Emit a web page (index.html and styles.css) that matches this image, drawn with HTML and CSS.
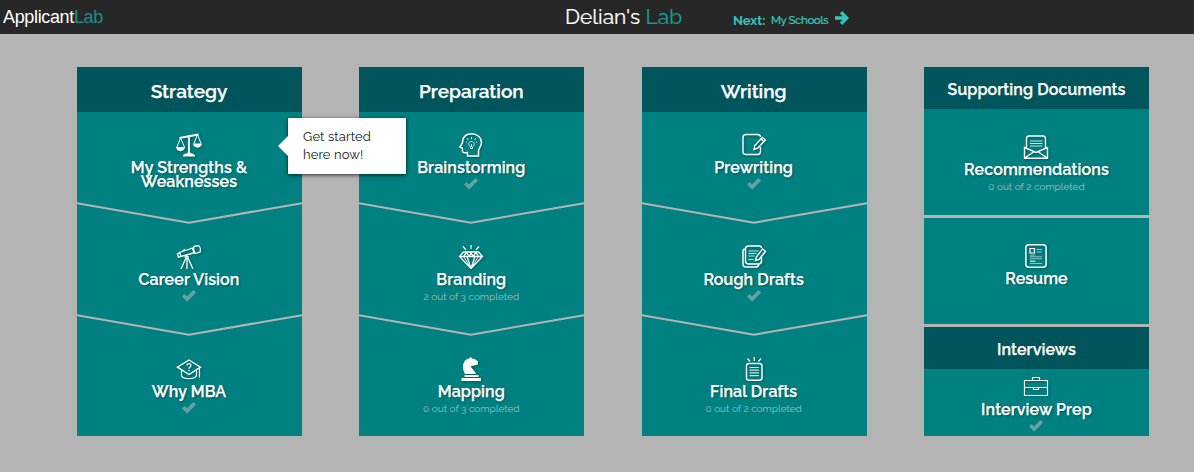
FILE: index.html
```html
<!DOCTYPE html>
<html lang="en">
<head>
<meta charset="utf-8">
<title>Delian's Lab</title>
<link rel="stylesheet" href="styles.css">
</head>
<body>
<header class="topbar">
  <div class="logo">Applicant<span class="logo-lab">Lab</span></div>
  <h1 class="heading">Delian's <span class="heading-lab">Lab</span></h1>
  <a class="next"><b class="next-label">Next:</b><span class="next-name">My Schools</span>
    <svg class="next-arrow" width="14" height="14" viewBox="0 0 14 14"><path d="M0 5.300h7.600L4.800 2.400 7.200 0 14 7l-6.800 7-2.400-2.400 2.800-2.900H0z" fill="currentColor"/></svg></a>
</header>

<svg width="0" height="0" class="defs">
  <symbol id="check" viewBox="0 0 14 12"><path d="M0 6.600 2.500 4.100 5 6.500 11.400 0 14 2.400 5.200 11.600z"/></symbol>
  <symbol id="chevron" viewBox="0 0 225 22"><path d="M0 1.200 112 20.700 225 1.200" fill="none" stroke="#b4b4b4" stroke-width="2"/></symbol>
</svg>

<main class="board">
  <section class="column">
    <h2 class="column-title">Strategy</h2>
    <div class="tile">
      <svg class="icon" viewBox="0 0 26 24"><path d="M3.500 5 22.500 1.500M13 2v18" stroke-width="1.800"/><path d="M4.500 5 1 14M4.500 5l4 9M21.500 1.500 18 10.500M21.500 1.500l3.500 9" stroke-width="1"/><path d="M0 14h9c-.3 5.500-8.700 5.500-9 0zM17 10.500h9c-.3 5.500-8.700 5.500-9 0zM7 23.500c0-2.300 1.500-3 3.500-3 .5-1.500 4.500-1.500 5 0 2 0 3.500.7 3.500 3z" class="solid"/></svg>
      <h3 class="tile-title">My Strengths &amp;<br>Weaknesses</h3>
      <svg class="chevron"><use href="#chevron"/></svg>
    </div>
    <div class="tile">
      <svg class="icon" viewBox="0 0 26 24"><path d="M3.600 7.500 16.500 3l1.500 5L5 11.500zM18 1.500l4.500-1c1.500 1 2.300 4 1.500 6.500L19.500 8.500c-1.500-1.500-2.200-4.500-1.500-7zM1.500 9l2.100-1.500L5 11.500l-2.600.7zM6.500 5.500l2.500-1M11 10v2.500M8.500 12h4.500M10 13 5 24M11 13V24M12 13 17 24" stroke-width="1.300"/></svg>
      <h3 class="tile-title">Career Vision</h3>
      <svg class="check"><use href="#check"/></svg>
      <svg class="chevron"><use href="#chevron"/></svg>
    </div>
    <div class="tile tile-last">
      <svg class="icon" viewBox="0 0 26 24"><path d="M1.500 10.200 13 3l11.500 7.200L13 17.500z" stroke-width="1.400"/><path d="M5.500 13v6c2 3.500 12.500 3.500 15 0v-6M23.500 11v9.500" stroke-width="1.200"/><path d="M11 8.500c0-2.500 4-2.500 4 0 0 1.700-2 1.500-2 3.200M13 13v1.300" stroke-width="1.300"/></svg>
      <h3 class="tile-title">Why MBA</h3>
      <svg class="check"><use href="#check"/></svg>
    </div>
    <div class="tip">Get started<br>here now!<svg class="tip-arrow" viewBox="0 0 10 20"><path d="M10 0 0 10l10 10z" fill="#fff"/></svg></div>
  </section>

  <section class="column">
    <h2 class="column-title">Preparation</h2>
    <div class="tile">
      <svg class="icon" viewBox="0 0 26 24"><path d="M9.500 23v-3.500c-2.500.5-4.800.8-5-1.200l-.2-3.300-2.300-.8 2.500-4.700C4.500 3.500 8.500.8 13.500.8c5.500 0 10 3.700 10 8.700 0 4-3 5.500-3 8.800V23z" stroke-width="1.500"/><path d="M12.500 15.500v-1.800c-3-1.500-2-5.200 1-5.200s4 3.700 1 5.200v1.800zM13.500 4v2M9 5l1.500 2M18 5l-1.500 2M8 9l1 .5M19 9l-1 .5M13.500 11v3" stroke-width=".8"/></svg>
      <h3 class="tile-title">Brainstorming</h3>
      <svg class="check"><use href="#check"/></svg>
      <svg class="chevron"><use href="#chevron"/></svg>
    </div>
    <div class="tile">
      <svg class="icon" viewBox="0 0 26 24"><path d="M5.500 7h15l4 4.500L13 23.500 1.500 11.500zM1.500 11.500h23M9 11.500l4 12 4-12M5.500 11.500 8.500 7.500l3 4 1.500-4 2 4 3-4 2.500 4" stroke-width="1.300"/><path d="M5.500 11.500 13 23.500l7.500-12" stroke-width=".9"/><path d="M13 0v4M5 1.500 8 5M21 1.500 18 5" stroke-width="1.200"/></svg>
      <h3 class="tile-title">Branding</h3>
      <p class="status">2 out of 3 completed</p>
      <svg class="chevron"><use href="#chevron"/></svg>
    </div>
    <div class="tile tile-last">
      <svg class="icon" viewBox="0 0 26 24"><path d="M7 17C3.500 11 4.500 2.500 11 1.500L13 0l1 1.500c2.500.5 4.800 1.300 6 3v3l-4 1-3 .5c0 2.500 3.500 4 5 8zM6.500 18h14v2h-14zM3.500 21H23v3H3.500z" class="solid"/></svg>
      <h3 class="tile-title">Mapping</h3>
      <p class="status">0 out of 3 completed</p>
    </div>
  </section>

  <section class="column">
    <h2 class="column-title">Writing</h2>
    <div class="tile">
      <svg class="icon" viewBox="0 0 26 24"><path d="M19.500 14v4.500c0 2-1 3-3 3H5c-2 0-3-1-3-3v-14c0-2 1-3 3-3h11.500c2 0 3 .8 3 2.500" stroke-width="1.400"/><path d="M13 16.500l.8-4 7.500-8 3 2.500-7.500 8.200zM20 6l2.800 2.500" stroke-width="1.400"/></svg>
      <h3 class="tile-title">Prewriting</h3>
      <svg class="check"><use href="#check"/></svg>
      <svg class="chevron"><use href="#chevron"/></svg>
    </div>
    <div class="tile">
      <svg class="icon" viewBox="0 0 26 24"><path d="M20.500 12v4c0 2-1 3-3 3H7.500c-2 0-3-1-3-3V4c0-2 1-3 3-3h10.500c1.500 0 2.500.8 2.500 2M4 4c-1.500 0-2 1-2 2.500V19c0 2 1 3 3 3h9.500c2 0 3-.5 3.500-2.500" stroke-width="1.500"/><path d="M7.500 6h10M7.500 8.500h8M7.500 11h6M7.500 14.500h5" stroke-width="1" opacity=".8"/><path d="M14.500 15.500l.8-3.500 6.200-8 3 2.300-6.300 8z" stroke-width="1.400"/></svg>
      <h3 class="tile-title">Rough Drafts</h3>
      <svg class="check"><use href="#check"/></svg>
      <svg class="chevron"><use href="#chevron"/></svg>
    </div>
    <div class="tile tile-last">
      <svg class="icon" viewBox="0 0 26 24"><rect x="5.500" y="6.500" width="15.500" height="16.800" rx="2.500" stroke-width="1.400"/><path d="M8.500 10.500h9.500M8.500 13.200h9.500M8.500 15.900h9.500M8.500 18.600h9.500" stroke-width="1.200" opacity=".8"/><path d="M13.300 0v4M6.500 1.500l2.500 3M20 1.500l-2.500 3" stroke-width="1.200"/></svg>
      <h3 class="tile-title">Final Drafts</h3>
      <p class="status">0 out of 2 completed</p>
    </div>
  </section>

  <section class="column">
    <h2 class="column-title column-title-small">Supporting Documents</h2>
    <div class="tile tile-document">
      <svg class="icon" viewBox="0 0 26 24"><path d="M3.500 13V4c0-2 .8-3 2.500-3h14c1.700 0 2.500 1 2.500 3v9M1.500 12.500 13 17.500l11.500-5v10.800h-23zM1.500 23.300 10.500 17M24.500 23.300 15.500 17" stroke-width="1.400"/><path d="M7 6h12.500M7 8.500h12.500M7 11h12.500" stroke-width="1.100" opacity=".8"/></svg>
      <h3 class="tile-title">Recommendations</h3>
      <p class="status">0 out of 2 completed</p>
    </div>
    <div class="tile tile-document">
      <svg class="icon" viewBox="0 0 26 24"><rect x="2.900" y=".8" width="20.200" height="22.400" rx="3" stroke-width="1.500"/><path d="M7 4.500h4.500V9H7z" stroke-width="1.200"/><path d="M13.500 5.500H19M13.500 8H19M7 11h5.500M7 12.800h12M7 14.800h12M7 19.500h12" stroke-width=".8" opacity=".7"/><path d="M7 17.200h5.500"/></svg>
      <h3 class="tile-title">Resume</h3>
    </div>
    <h2 class="column-title column-title-small">Interviews</h2>
    <div class="tile tile-interview">
      <svg class="icon" viewBox="0 0 26 24"><path d="M1.500 5.500h23v15h-23zM1.500 12.500h23M9.500 5.500v-3h7v3M10.500 12.500v2h5v-2" stroke-width="1.200"/></svg>
      <h3 class="tile-title">Interview Prep</h3>
      <svg class="check"><use href="#check"/></svg>
    </div>
  </section>
</main>
</body>
</html>
```
FILE: styles.css
```css
* { box-sizing: border-box; }
html, body { margin: 0; height: 100%; }
body {
  background: #b4b4b4;
  font-family: Raleway, Lato, sans-serif;
  color: #fff;
  overflow: hidden;
}
h1, h2, h3, p { margin: 0; }
.defs { position: absolute; }
.topbar {
  display: grid;
  grid-template-columns: 565px 168px 1fr;
  height: 34px;
  background: #272727;
  white-space: nowrap;
}
.logo {
  padding-left: 3px;
  font: 18px/35px "Liberation Sans", sans-serif;
  letter-spacing: -.35px;
}
.logo-lab { color: #178f8c; }
.heading { font-size: 21px; line-height: 33px; font-weight: 400; -webkit-text-stroke: .2px; }
.heading-lab { color: #0fa194; }
.next { display: flex; align-items: center; padding-top: 5px; color: #36c3b9; font-size: 11.5px; }
.next-label { font-weight: 700; font-size: 13px; width: 38px; }
.next-name { font-weight: 500; width: 64px; letter-spacing: -.45px; -webkit-text-stroke: .2px; }
.next-arrow { margin-top: -4px; flex: none; }

.board { display: flex; justify-content: space-between; padding: 33px 45px 0 77px; }
.column { position: relative; width: 225px; height: 369px; }
.column-title {
  height: 45px;
  padding-right: 1px;
  background: #00545b;
  font-size: 19px;
  line-height: 49px;
  font-weight: 600;
  text-align: center;
  white-space: nowrap;
  -webkit-text-stroke: .25px;
}
.column-title-small { height: 42px; padding-right: 0; font-size: 16px; line-height: 46px; letter-spacing: .1px; }
.tile {
  position: relative;
  display: flex;
  flex-direction: column;
  align-items: center;
  height: 112px;
  padding: 21px 1px 0 0;
  background: #008080;
}
.tile-last { height: 100px; }
.tile-document { height: 106px; padding: 26px 0 0; margin-bottom: 3px; }
.tile-interview { height: 67px; padding: 6px 0 0; }
.icon {
  width: 26px;
  height: 24px;
  flex: none;
  fill: none;
  stroke: #fff;
  filter: drop-shadow(1px 1px 1px rgba(0, 0, 0, .3));
}
.solid { fill: #fff; stroke: none; }
.tile-title {
  margin-top: 4px;
  font-size: 16px;
  line-height: 14px;
  font-weight: 600;
  letter-spacing: .12px;
  text-align: center;
  white-space: nowrap;
  text-shadow: 1px 1px 2px rgba(0, 0, 0, .4);
  -webkit-text-stroke: .25px;
}
.check { width: 14px; height: 12px; margin-top: 3px; fill: #65a4a5; flex: none; }
.status { margin-top: 3px; font-size: 10px; line-height: 14px; color: #93c3c0; white-space: nowrap; }
.chevron { position: absolute; left: 0; bottom: 0; width: 225px; height: 22px; }
.tip {
  position: absolute;
  left: 211px;
  top: 51px;
  z-index: 2;
  width: 118px;
  height: 56px;
  padding: 10px 0 0 15px;
  background: #fff;
  color: #222;
  font-size: 13px;
  line-height: 18px;
  letter-spacing: .1px;
  box-shadow: 0 1px 4px rgba(0, 0, 0, .75);
}
.tip-arrow { position: absolute; left: -10px; top: 18px; width: 10px; height: 20px; }
```
